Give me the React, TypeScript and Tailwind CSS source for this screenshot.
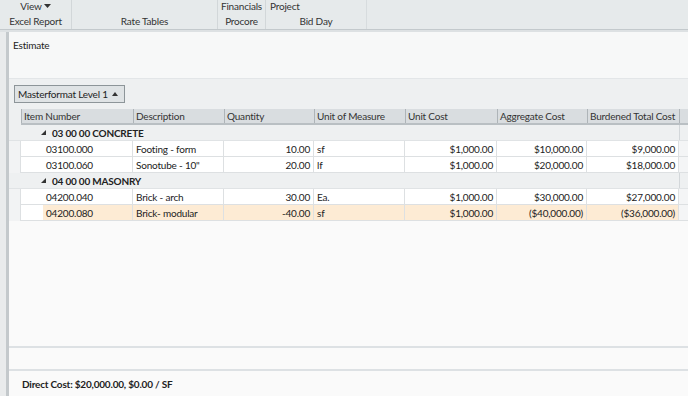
const cols = [
  { label: "Item Number", w: "w-[112px]", align: "text-left" },
  { label: "Description", w: "w-[91px]", align: "text-left" },
  { label: "Quantity", w: "w-[90px]", align: "text-right" },
  { label: "Unit of Measure", w: "w-[91px]", align: "text-left" },
  { label: "Unit Cost", w: "w-[92px]", align: "text-right" },
  { label: "Aggregate Cost", w: "w-[90px]", align: "text-right" },
  { label: "Burdened Total Cost", w: "w-[92px]", align: "text-right" },
];

type Row =
  | { kind: "group"; title: string }
  | { kind: "item"; cells: string[]; hi?: boolean };

const rows: Row[] = [
  { kind: "group", title: "03 00 00 CONCRETE" },
  { kind: "item", cells: ["03100.000", "Footing - form", "10.00", "sf", "$1,000.00", "$10,000.00", "$9,000.00"] },
  { kind: "item", cells: ["03100.060", "Sonotube - 10\"", "20.00", "lf", "$1,000.00", "$20,000.00", "$18,000.00"] },
  { kind: "group", title: "04 00 00 MASONRY" },
  { kind: "item", cells: ["04200.040", "Brick - arch", "30.00", "Ea.", "$1,000.00", "$30,000.00", "$27,000.00"] },
  { kind: "item", cells: ["04200.080", "Brick- modular", "-40.00", "sf", "$1,000.00", "($40,000.00)", "($36,000.00)"], hi: true },
];

const App = () => {
  return (
    <div className="w-[688px] h-[396px] overflow-hidden bg-[#f9f9f9] text-[#222] text-[10px] tracking-[-0.2px] leading-none whitespace-nowrap font-['Lato','Open_Sans',sans-serif] flex flex-col">
      {/* ribbon */}
      <div className="h-[29px] bg-[#e6eaeb] flex text-[#333] shrink-0">
        <div className="w-[72px] border-r border-[#d2d7d9] flex flex-col items-center gap-[5px] pt-[1px]">
          <span className="flex items-center gap-[2px] h-[10px]">
            View
            <svg width="7" height="4" viewBox="0 0 7 4"><path d="M0 0h7L3.5 4z" fill="#333" /></svg>
          </span>
          <span className="h-[10px]">Excel Report</span>
        </div>
        <div className="w-[146px] border-r border-[#d2d7d9] flex flex-col items-center pt-[16px]">
          <span className="h-[10px]">Rate Tables</span>
        </div>
        <div className="w-[48px] border-r border-[#d2d7d9] flex flex-col items-center gap-[5px] pt-[1px]">
          <span className="h-[10px]">Financials</span>
          <span className="h-[10px]">Procore</span>
        </div>
        <div className="w-[101px] border-r border-[#d7dcde] flex flex-col gap-[5px] pt-[1px]">
          <span className="pl-[4px] h-[10px]">Project</span>
          <span className="self-center h-[10px]">Bid Day</span>
        </div>
        <div className="flex-1" />
      </div>
      <div className="h-[1px] bg-[#c3c9cc] shrink-0" />
      <div className="h-[2px] bg-[#dde1e3] shrink-0" />

      <div className="flex flex-1 min-h-0">
        {/* left rail */}
        <div className="w-[6px] bg-[#e9ebec] shrink-0" />
        <div className="w-[3px] bg-[#c4c9cc] shrink-0" />

        <div className="flex-1 flex flex-col min-w-0">
          <div className="h-[47px] bg-[#f7f8f8] px-[4px] pt-[8px] border-b border-[#e3e6e8] shrink-0">
            Estimate
          </div>
          <div className="h-[30px] bg-[#eef0f1] flex items-center pl-[5px] shrink-0">
            <div className="w-[111px] h-[18px] bg-[#dfe3e5] border border-[#8d9599] flex items-center justify-between pl-[3px] pr-[6px]">
              <span>Masterformat Level 1</span>
              <svg width="6" height="4" viewBox="0 0 6 4"><path d="M0 4h6L3 0z" fill="#333" /></svg>
            </div>
          </div>

          {/* grid header */}
          <div className="h-[16px] flex bg-[#eef0f1] shrink-0">
            <div className="w-[12px]" />
            <div className="flex flex-1 bg-[#d9dde0] border-b-2 border-[#b9bfc3]">
              {cols.map((c) => (
                <div key={c.label} className={`${c.w} h-full border-l border-[#aeb4b8] pl-[2px] flex items-center text-[#333] shrink-0`}>
                  {c.label}
                </div>
              ))}
              <div className="flex-1 border-l border-[#aeb4b8]" />
            </div>
          </div>

          {/* rows */}
          {rows.map((r, i) =>
            r.kind === "group" ? (
              <div key={i} className="h-[16px] flex bg-[#eef0f1] border-b border-[#e0e3e5] shrink-0">
                <div className="w-[12px]" />
                <div className="flex-1 flex items-center">
                  <div className="w-[31px] flex justify-end pr-[6px]">
                    <svg width="5" height="5" viewBox="0 0 5 5"><path d="M5 0v5H0z" fill="#333" /></svg>
                  </div>
                  <span className="font-bold text-[#222]">{r.title}</span>
                  <div className="flex-1" />
                  <div className="w-[9px] h-full border-l border-[#d3d7da]" />
                </div>
              </div>
            ) : (
              <div key={i} className="h-[16px] flex bg-[#eef0f1] shrink-0">
                <div className="w-[11px] bg-[#f2f3f4]" />
                <div className="w-[23px] bg-white border-l border-b border-[#dde0e2]" />
                {r.cells.map((v, j) => {
                  const c = cols[j];
                  const w = j === 0 ? "w-[90px]" : c.w;
                  return (
                    <div
                      key={j}
                      className={`${w} h-full shrink-0 border-b border-r border-[#dde0e2] px-[3px] flex items-center ${c.align === "text-right" ? "justify-end" : "justify-start"} ${r.hi ? "bg-[#fdebd4]" : "bg-white"}`}
                    >
                      {v}
                    </div>
                  );
                })}
                <div className="flex-1 bg-[#f4f5f6] border-b border-[#dde0e2]" />
              </div>
            )
          )}

          <div className="flex-1 bg-[#fafafa] border-b-2 border-[#dde1e4]" />
          <div className="h-[23px] bg-[#fafafa] border-b-2 border-[#dde1e4] shrink-0" />
          <div className="h-[25px] bg-[#fafafa] flex items-center pl-[13px] shrink-0">
            <span className="font-bold text-[#222]">Direct Cost: $20,000.00, $0.00 / SF</span>
          </div>
        </div>
      </div>
    </div>
  );
};

export default App;
